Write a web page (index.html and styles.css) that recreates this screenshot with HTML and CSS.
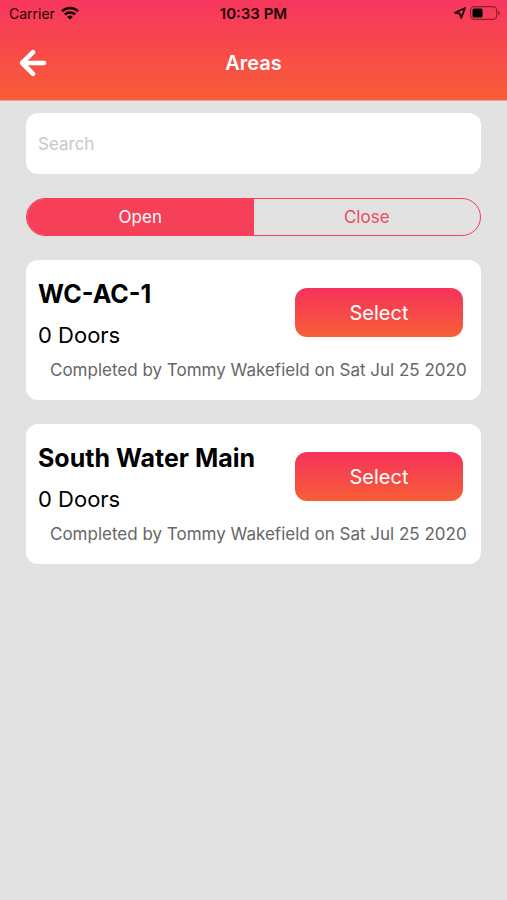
FILE: index.html
```html
<!DOCTYPE html>
<html lang="en">
<head>
    <meta charset="UTF-8">
    <meta name="viewport" content="width=device-width, initial-scale=1.0">
    <title>Areas</title>
    <link rel="stylesheet" href="styles.css">
</head>
<body>
    <header class="header">
        <div class="status-bar">
            <div class="status-left">
                <span>Carrier</span>
                <svg class="wifi" viewBox="0 0 18 14" width="18" height="14" fill="none" stroke="#1c0508" stroke-width="2.6">
                    <path d="M1 5.2a11.6 11.6 0 0 1 16 0"/>
                    <path d="M3.9 8.5a7.4 7.4 0 0 1 10.2 0"/>
                    <path d="M9 13.6L6.2 10.9a4 4 0 0 1 5.6 0z" fill="#1c0508" stroke="none"/>
                </svg>
            </div>
            <span class="time">10:33 PM</span>
            <div class="status-right">
                <svg viewBox="0 0 12 12" width="12" height="12" fill="none" stroke="#1c0508" stroke-width="1.8" stroke-linejoin="round">
                    <path d="M11 1L1 5.8l4.6.7 1.6 4.3z"/>
                </svg>
                <svg viewBox="0 0 31 14" width="31" height="14">
                    <rect x=".6" y=".6" width="26" height="12.8" rx="3.6" fill="none" stroke="#1c0508" stroke-opacity=".5" stroke-width="1.1"/>
                    <rect x="2.5" y="2.5" width="10" height="9" rx="1.6" fill="#000"/>
                    <path d="M28 4.6v4.8c2.2-.8 2.2-4 0-4.8z" fill="#1c0508" fill-opacity=".5"/>
                </svg>
            </div>
        </div>
        <nav class="nav-bar">
            <button type="button" class="back" aria-label="Back">
                <svg viewBox="0 0 28 28" width="28" height="28" fill="none" stroke="#fff" stroke-width="4.6" stroke-linecap="round" stroke-linejoin="round">
                    <path d="M14 3.2L3.2 14 14 24.8"/>
                    <path d="M4 14h20.5" stroke-linecap="butt"/>
                    <path d="M24.6 14h.4"/>
                </svg>
            </button>
            <h1>Areas</h1>
        </nav>
    </header>

    <main class="content">
        <input type="search" class="search" placeholder="Search" aria-label="Search">

        <div class="tabs">
            <button type="button" class="tab active" aria-pressed="true">Open</button>
            <button type="button" class="tab" aria-pressed="false">Close</button>
        </div>

        <section class="card">
            <div class="card-top">
                <div>
                    <h2>WC-AC-1</h2>
                    <p class="doors">0 Doors</p>
                </div>
                <button type="button" class="select">Select</button>
            </div>
            <p class="completed">Completed by Tommy Wakefield on Sat Jul 25 2020</p>
        </section>

        <section class="card">
            <div class="card-top">
                <div>
                    <h2>South Water Main</h2>
                    <p class="doors">0 Doors</p>
                </div>
                <button type="button" class="select">Select</button>
            </div>
            <p class="completed">Completed by Tommy Wakefield on Sat Jul 25 2020</p>
        </section>
    </main>

    <script>
        const tabs = document.querySelectorAll('.tab');

        tabs.forEach(function(tab) {
            tab.addEventListener('click', function() {
                tabs.forEach(function(other) {
                    other.classList.toggle('active', other === tab);
                    other.setAttribute('aria-pressed', other === tab);
                });
            });
        });
    </script>
</body>
</html>
```

FILE: styles.css
```css
* {
    box-sizing: border-box;
}

body {
    margin: 0;
    min-height: 100vh;
    background: #e2e2e2;
    color: #000;
    font-family: Inter, "Liberation Sans", sans-serif;
}

h1, h2, p {
    margin: 0;
}

button, input {
    font-family: inherit;
}

button {
    cursor: pointer;
}

.header {
    background: linear-gradient(#f8365f, #f75e36);
    border-bottom: 1px solid #f0a48e;
}

.status-bar {
    display: grid;
    grid-template-columns: 1fr auto 1fr;
    align-items: center;
    height: 26px;
    padding: 0 6px;
    color: #1c0508;
    font-size: 14px;
}

.status-left, .status-right {
    display: flex;
    align-items: center;
}

.status-left {
    gap: 6px;
    padding-left: 3px;
}

.status-right {
    justify-content: flex-end;
    gap: 4px;
}

.time {
    font-size: 15px;
    font-weight: 600;
}

.nav-bar {
    display: grid;
    grid-template-columns: 1fr auto 1fr;
    align-items: center;
    height: 74px;
    padding: 0 19px;
}

.back {
    display: flex;
    justify-self: start;
    padding: 0;
    background: none;
    border: none;
}

.nav-bar h1 {
    color: #fff;
    font-size: 20px;
    font-weight: 600;
}

.content {
    display: flex;
    flex-direction: column;
    gap: 24px;
    padding: 12px 26px;
}

.search {
    width: 100%;
    height: 61px;
    padding: 0 12px;
    background: #fff;
    border: none;
    border-radius: 12px;
    font-size: 17px;
    appearance: none;
}

.search::placeholder {
    color: #c8c8ca;
}

.tabs {
    display: flex;
    height: 38px;
    border: 1px solid #f63f58;
    border-radius: 19px;
    overflow: hidden;
}

.tab {
    flex: 1;
    padding: 0;
    background: none;
    border: none;
    color: #ee4a62;
    font-size: 17px;
}

.tab.active {
    background: #f63f58;
    color: #fff;
}

.card {
    padding: 16px 12px 18px;
    background: #fff;
    border-radius: 12px;
}

.card-top {
    display: flex;
    justify-content: space-between;
    align-items: flex-start;
    padding-right: 6px;
}

.card h2 {
    font-size: 25px;
    font-weight: 700;
    line-height: 36px;
}

.doors {
    font-size: 22px;
    line-height: 46px;
}

.select {
    width: 168px;
    height: 49px;
    margin-top: 12px;
    background: linear-gradient(#f5325c, #f75e36);
    border: none;
    border-radius: 12px;
    color: #fff;
    font-size: 20px;
}

.completed {
    padding-left: 12px;
    color: #666;
    font-size: 17px;
    line-height: 24px;
}
```
